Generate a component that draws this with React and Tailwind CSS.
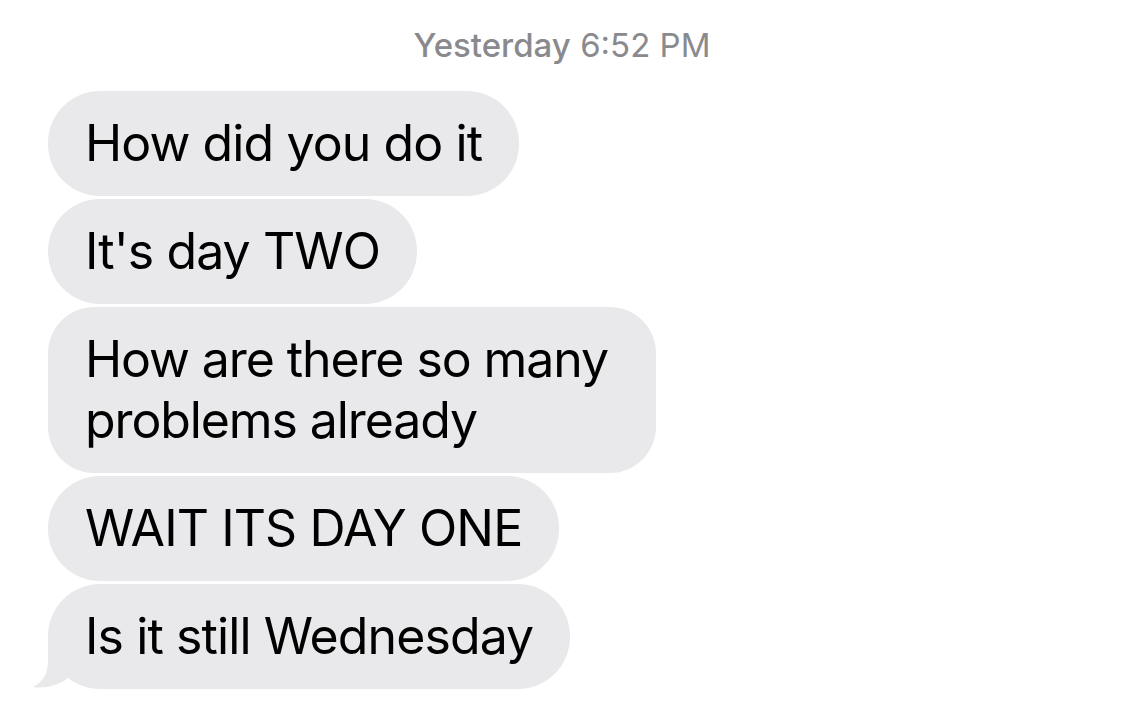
import React from 'react';

const messages = [
  { id: 1, lines: ['How did you do it'] },
  { id: 2, lines: ["It's day TWO"] },
  { id: 3, lines: ['How are there so many', 'problems already'], wide: true },
  { id: 4, lines: ['WAIT ITS DAY ONE'] },
  { id: 5, lines: ['Is it still Wednesday'], tail: true },
];

const Bubble = ({ lines, tail, wide }) => (
  <div className="relative self-start">
    {tail && (
      <svg
        className="absolute left-[-16px] bottom-0"
        width="44"
        height="54"
        viewBox="0 0 44 54"
      >
        <path
          d="M16 0 L16 26 C16 38 11 47 1 52 C14 54 26 50 35 44 L44 0 Z"
          fill="#e9e9eb"
        />
      </svg>
    )}
    <div
      className={
        wide
          ? 'relative w-[608px] bg-[#e9e9eb] rounded-[46px] pl-[37px] pr-[37px] py-[22px] text-[50px] leading-[61px] text-black tracking-[-1.1px]'
          : 'relative bg-[#e9e9eb] rounded-[52px] pl-[37px] pr-[37px] py-[22px] text-[50px] leading-[61px] text-black tracking-[-0.9px]'
      }
    >
      {lines.map((line, i) => (
        <div key={i}>{line}</div>
      ))}
    </div>
  </div>
);

export default function App() {
  return (
    <div
      className="w-[1124px] h-[708px] bg-white overflow-hidden"
      style={{ fontFamily: 'Inter, "Noto Sans", sans-serif' }}
    >
      <div className="pt-[25px] text-center text-[33px] leading-[40px] text-[#8a8a8e]">
        <span className="font-medium">Yesterday</span> 6:52 PM
      </div>
      <div className="flex flex-col gap-[3px] pl-[48px] pt-[26px]">
        {messages.map((m) => (
          <Bubble key={m.id} lines={m.lines} tail={m.tail} wide={m.wide} />
        ))}
      </div>
    </div>
  );
}
